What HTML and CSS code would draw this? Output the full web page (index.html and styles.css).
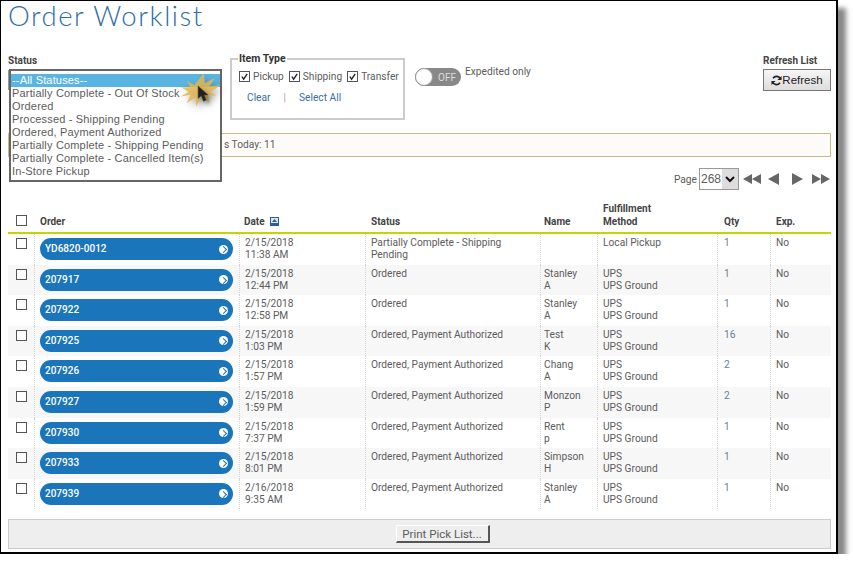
FILE: index.html
```html
<!DOCTYPE html>
<html lang="en">
<head>
    <meta charset="UTF-8">
    <title>Order Worklist</title>
    <link rel="stylesheet" href="styles.css">
</head>
<body>
    <div class="window">
        <h1>Order Worklist</h1>

        <!-- Filters -->
        <div class="filters">
            <div class="status-filter">
                <label>Status</label>
                <div class="status-closed"></div>
            </div>
            <fieldset class="item-type">
                <legend>Item Type</legend>
                <div class="type-checks">
                    <span class="check-item"><span class="box checked"><svg viewBox="0 0 10 10"><path d="M2 5l2 3 4-6" fill="none" stroke="#222" stroke-width="1.5"/></svg></span>Pickup</span>
                    <span class="check-item"><span class="box checked"><svg viewBox="0 0 10 10"><path d="M2 5l2 3 4-6" fill="none" stroke="#222" stroke-width="1.5"/></svg></span>Shipping</span>
                    <span class="check-item"><span class="box checked"><svg viewBox="0 0 10 10"><path d="M2 5l2 3 4-6" fill="none" stroke="#222" stroke-width="1.5"/></svg></span>Transfer</span>
                </div>
                <div class="type-links">
                    <a>Clear</a><span class="sep">|</span><a>Select All</a>
                </div>
            </fieldset>
            <div class="expedited">
                <span class="toggle"><span class="knob"></span><span class="off">OFF</span></span>
                <span class="expedited-text">Expedited only</span>
            </div>
            <div class="refresh">
                <label>Refresh List</label>
                <button class="refresh-btn" type="button"><svg viewBox="0 0 12 12" width="11" height="11"><path d="M10.5 4.5A4.7 4.7 0 0 0 2.2 3.6M1.5 7.5a4.7 4.7 0 0 0 8.3.9" fill="none" stroke="#222" stroke-width="1.7"/><path d="M11.5 1v4.5H7zM.5 11V6.500H5z" fill="#222"/></svg>Refresh</button>
            </div>
        </div>

        <div class="notice">s Today: 11</div>

        <!-- Pager -->
        <div class="pager">
            <span>Page</span>
            <span class="page-select"><span class="page-num">268</span><span class="page-arrow"><svg viewBox="0 0 12 12" width="12" height="12"><path d="M2 4l4 4 4-4" fill="none" stroke="#111" stroke-width="2"/></svg></span></span>
            <svg class="pager-icons" viewBox="0 0 87 14" width="87" height="14" fill="#666">
                <path d="M9 2v10L0 7zM18 2v10L9 7z"/>
                <path d="M36 1v12L25 7z"/>
                <path d="M49 1v12L60 7z"/>
                <path d="M69 2v10l9-5zM78 2v10l9-5z"/>
            </svg>
        </div>

        <!-- Order table -->
        <div class="orders">
            <div class="row head">
                <div class="cell"><span class="box"></span></div>
                <div class="cell">Order</div>
                <div class="cell">Date <svg class="sort" viewBox="0 0 9 9" width="9" height="9"><rect width="9" height="9" fill="#2a5f9e"/><rect x="1" y="1" width="7" height="7" fill="#dce8f3"/><path d="M4.500 2L7 5H2z" fill="#2a5f9e"/><rect x="1" y="6" width="7" height="2" fill="#2a5f9e"/></svg></div>
                <div class="cell">Status</div>
                <div class="cell">Name</div>
                <div class="cell">Fulfillment<br>Method</div>
                <div class="cell">Qty</div>
                <div class="cell">Exp.</div>
            </div>

            <div class="row">
                <div class="cell"><span class="box"></span></div>
                <div class="cell"><a class="pill">YD6820-0012<span class="go"></span></a></div>
                <div class="cell">2/15/2018<br>11:38 AM</div>
                <div class="cell">Partially Complete - Shipping<br>Pending</div>
                <div class="cell"></div>
                <div class="cell">Local Pickup</div>
                <div class="cell qty">1</div>
                <div class="cell">No</div>
            </div>
            <div class="row">
                <div class="cell"><span class="box"></span></div>
                <div class="cell"><a class="pill">207917<span class="go"></span></a></div>
                <div class="cell">2/15/2018<br>12:44 PM</div>
                <div class="cell">Ordered</div>
                <div class="cell">Stanley<br>A</div>
                <div class="cell">UPS<br>UPS Ground</div>
                <div class="cell qty">1</div>
                <div class="cell">No</div>
            </div>
            <div class="row">
                <div class="cell"><span class="box"></span></div>
                <div class="cell"><a class="pill">207922<span class="go"></span></a></div>
                <div class="cell">2/15/2018<br>12:58 PM</div>
                <div class="cell">Ordered</div>
                <div class="cell">Stanley<br>A</div>
                <div class="cell">UPS<br>UPS Ground</div>
                <div class="cell qty">1</div>
                <div class="cell">No</div>
            </div>
            <div class="row">
                <div class="cell"><span class="box"></span></div>
                <div class="cell"><a class="pill">207925<span class="go"></span></a></div>
                <div class="cell">2/15/2018<br>1:03 PM</div>
                <div class="cell">Ordered, Payment Authorized</div>
                <div class="cell">Test<br>K</div>
                <div class="cell">UPS<br>UPS Ground</div>
                <div class="cell qty">16</div>
                <div class="cell">No</div>
            </div>
            <div class="row">
                <div class="cell"><span class="box"></span></div>
                <div class="cell"><a class="pill">207926<span class="go"></span></a></div>
                <div class="cell">2/15/2018<br>1:57 PM</div>
                <div class="cell">Ordered, Payment Authorized</div>
                <div class="cell">Chang<br>A</div>
                <div class="cell">UPS<br>UPS Ground</div>
                <div class="cell qty">2</div>
                <div class="cell">No</div>
            </div>
            <div class="row">
                <div class="cell"><span class="box"></span></div>
                <div class="cell"><a class="pill">207927<span class="go"></span></a></div>
                <div class="cell">2/15/2018<br>1:59 PM</div>
                <div class="cell">Ordered, Payment Authorized</div>
                <div class="cell">Monzon<br>P</div>
                <div class="cell">UPS<br>UPS Ground</div>
                <div class="cell qty">2</div>
                <div class="cell">No</div>
            </div>
            <div class="row">
                <div class="cell"><span class="box"></span></div>
                <div class="cell"><a class="pill">207930<span class="go"></span></a></div>
                <div class="cell">2/15/2018<br>7:37 PM</div>
                <div class="cell">Ordered, Payment Authorized</div>
                <div class="cell">Rent<br>p</div>
                <div class="cell">UPS<br>UPS Ground</div>
                <div class="cell qty">1</div>
                <div class="cell">No</div>
            </div>
            <div class="row">
                <div class="cell"><span class="box"></span></div>
                <div class="cell"><a class="pill">207933<span class="go"></span></a></div>
                <div class="cell">2/15/2018<br>8:01 PM</div>
                <div class="cell">Ordered, Payment Authorized</div>
                <div class="cell">Simpson<br>H</div>
                <div class="cell">UPS<br>UPS Ground</div>
                <div class="cell qty">1</div>
                <div class="cell">No</div>
            </div>
            <div class="row">
                <div class="cell"><span class="box"></span></div>
                <div class="cell"><a class="pill">207939<span class="go"></span></a></div>
                <div class="cell">2/16/2018<br>9:35 AM</div>
                <div class="cell">Ordered, Payment Authorized</div>
                <div class="cell">Stanley<br>A</div>
                <div class="cell">UPS<br>UPS Ground</div>
                <div class="cell qty">1</div>
                <div class="cell">No</div>
            </div>
        </div>

        <div class="footer-bar">
            <button class="print-btn" type="button">Print Pick List...</button>
        </div>

        <!-- Open status list, lies over the page -->
        <ul class="status-list">
            <li class="selected">--All Statuses--</li>
            <li>Partially Complete - Out Of Stock</li>
            <li>Ordered</li>
            <li>Processed - Shipping Pending</li>
            <li>Ordered, Payment Authorized</li>
            <li>Partially Complete - Shipping Pending</li>
            <li>Partially Complete - Cancelled Item(s)</li>
            <li>In-Store Pickup</li>
        </ul>

        <!-- Click burst and mouse pointer -->
        <svg class="burst" viewBox="0 0 44 40" width="44" height="38">
            <path d="M26 2l1 11 11-6-6 9 12-1-11 7 6 4-9-1 2 9-8-7-6 10-1-9-9 6 4-9-11 2 9-5-8-5 10 0-4-7 8 5z" fill="#e3b650" opacity=".85"/>
        </svg>
        <svg class="pointer" viewBox="0 0 14 20" width="13" height="18">
            <path d="M1 1v14l3.500-3 2.500 6 3-1.300-2.500-5.700H12z" fill="#222" stroke="#444" stroke-width=".6"/>
        </svg>
    </div>
</body>
</html>
```

FILE: styles.css
```css
* {
    box-sizing: border-box;
}
body {
    margin: 0;
    background: #fff;
    font-family: Roboto, "Liberation Sans", sans-serif;
    font-size: 10.2px;
    color: #5c5c5c;
}
.window {
    position: relative;
    width: 838px;
    height: 554px;
    padding: 0 5px 0 7px;
    background: #fff;
    border: 1px solid #000;
    border-width: 1px 2px 2px 1px;
    box-shadow: 8px 8px 5px #888;
}
h1 {
    margin: 0;
    height: 51px;
    font-family: Lato, sans-serif;
    font-weight: 300;
    font-size: 27.5px;
    line-height: 30px;
    letter-spacing: 1.55px;
    color: #2f6ca8;
}
label {
    display: block;
    font-weight: 700;
    font-size: 10px;
    color: #444;
}

/* filters */
.filters {
    display: flex;
    height: 72px;
    padding-top: 3px;
}
.status-filter {
    width: 222px;
}
.status-closed {
    width: 212px;
    height: 20px;
    margin-top: 4px;
    border: 1px solid #999;
}
.item-type {
    width: 175px;
    height: 68px;
    margin: -3px 0 0 0;
    padding: 6px 0 0 7px;
    border: 2px solid #ccc;
}
.item-type legend {
    padding: 0 1px;
    margin-left: -1px;
    font-weight: 700;
    font-size: 10.5px;
    color: #333;
}
.type-checks {
    display: flex;
    gap: 5px;
}
.check-item {
    display: flex;
    align-items: center;
    gap: 3px;
}
.box {
    display: inline-block;
    width: 11px;
    height: 11px;
    border: 1px solid #555;
    background: #fff;
}
.box svg {
    display: block;
    width: 9px;
    height: 9px;
}
.type-links {
    margin: 10px 0 0 8px;
    color: #3b6ea5;
}
.sep {
    margin: 0 13px;
    color: #b98;
}
.expedited {
    display: flex;
    gap: 4px;
    margin-left: 10px;
    height: 18px;
    margin-top: 13px;
}
.expedited-text {
    margin-top: -2px;
}
.toggle {
    display: flex;
    align-items: center;
    width: 46px;
    height: 18px;
    border-radius: 9px;
    background: #888;
}
.knob {
    width: 18px;
    height: 18px;
    border-radius: 50%;
    background: #fff;
    border: 1px solid #999;
}
.off {
    margin-left: 5px;
    color: #ddd;
    font-size: 10px;
}
.refresh {
    width: 68px;
    margin-left: auto;
}
.refresh-btn {
    display: flex;
    align-items: center;
    justify-content: center;
    width: 68px;
    height: 22px;
    margin-top: 3px;
    padding: 0;
    border: 1px solid #777;
    background: linear-gradient(#f6f6f6, #ddd);
    font-family: "Liberation Sans", sans-serif;
    font-size: 11.5px;
    color: #222;
}

/* notice and pager */
.notice {
    height: 24px;
    margin-top: 9px;
    padding: 5px 0 0 214px;
    border: 1px solid #c9bd87;
    border-left-width: 2px;
    background: #fdfbf7;
}
.pager {
    display: flex;
    justify-content: flex-end;
    align-items: center;
    height: 22px;
    margin: 11px 1px 0 0;
    gap: 2px;
}
.page-select {
    display: flex;
    width: 40px;
    height: 22px;
    border: 1px solid #999;
    font-family: "Liberation Sans", sans-serif;
    font-size: 12px;
}
.page-num {
    flex: 1;
    padding: 3px 0 0 1px;
}
.page-arrow {
    display: flex;
    align-items: center;
    justify-content: center;
    width: 16px;
    background: #ddd;
}
.pager-icons {
    margin-left: 2px;
}

/* table */
.orders {
    margin-top: 14px;
}
.row {
    display: grid;
    grid-template-columns: 26px 205px 126px 175px 57px 120px 53px 61px;
    height: 30.6px;
    line-height: 12px;
}
.row:nth-child(odd) {
    background: #f7f7f7;
}
.cell {
    padding: 3px 5px 0 5px;
    border-left: 1px dotted #d4d4d4;
    overflow: hidden;
}
.cell:first-child {
    border-left: 0;
    padding: 4px 0 0 8px;
}
.cell:nth-child(5) {
    padding-left: 3px;
}
.cell:nth-child(7) {
    padding-left: 6px;
}
.qty {
    color: #6a8196;
}
.row.head {
    height: 30px;
    background: #fff;
    border-bottom: 2px solid #c4d600;
    font-weight: 700;
    font-size: 10px;
    line-height: 12.5px;
    color: #444;
}
.head .cell {
    align-self: end;
    padding-bottom: 4px;
    padding-left: 6px;
    border-left: 0;
}
.head .cell:first-child {
    padding: 0 0 3px 8px;
}
.head .cell:nth-child(3) {
    padding-left: 5px;
}
.head .cell:nth-child(5) {
    padding-left: 4px;
}
.head .cell:nth-child(7) {
    padding-left: 7px;
}
.sort {
    margin-left: 3px;
    vertical-align: -1px;
}
.pill {
    display: flex;
    align-items: center;
    justify-content: space-between;
    height: 22px;
    margin: 1px 1px 0 0;
    padding: 0 5px;
    border-radius: 11px;
    background: #1b75bb;
    color: #fff;
    font-size: 10px;
    font-weight: 500;
}
.go {
    position: relative;
    width: 9px;
    height: 9px;
    border-radius: 50%;
    background: #fff;
}
.go::after {
    content: "";
    position: absolute;
    left: 1.500px;
    top: 2.500px;
    width: 4px;
    height: 4px;
    border: solid #1b75bb;
    border-width: 1.500px 1.500px 0 0;
    transform: rotate(45deg);
}
.footer-bar {
    display: flex;
    justify-content: center;
    align-items: center;
    height: 30px;
    margin-top: 10px;
    padding-left: 46px;
    border: 1px solid #ccc;
    background: #eee;
}
.print-btn {
    width: 94px;
    height: 18px;
    padding: 0;
    border: 1px solid #fff;
    border-right: 2px solid #555;
    border-bottom: 2px solid #555;
    background: #eee;
    font-family: Roboto, sans-serif;
    font-size: 11.5px;
    color: #5c5c5c;
}

/* open status list */
.status-list {
    position: absolute;
    left: 8px;
    top: 68px;
    width: 213px;
    height: 113px;
    margin: 0;
    padding: 3px 0 0;
    list-style: none;
    background: #fff;
    border: 2px solid #666;
    font-family: "Liberation Sans", sans-serif;
    font-size: 11px;
    line-height: 13px;
    letter-spacing: .17px;
    color: #5c5c5c;
}
.status-list li {
    padding-left: 1px;
}
.status-list .selected {
    background: #5ab4e0;
    color: #fff;
}
.burst {
    position: absolute;
    left: 177px;
    top: 70px;
    filter: drop-shadow(3px 4px 3px rgba(0, 0, 0, .3));
}
.pointer {
    position: absolute;
    left: 196px;
    top: 84px;
    filter: drop-shadow(3px 3px 2px rgba(0, 0, 0, .4));
}
```
